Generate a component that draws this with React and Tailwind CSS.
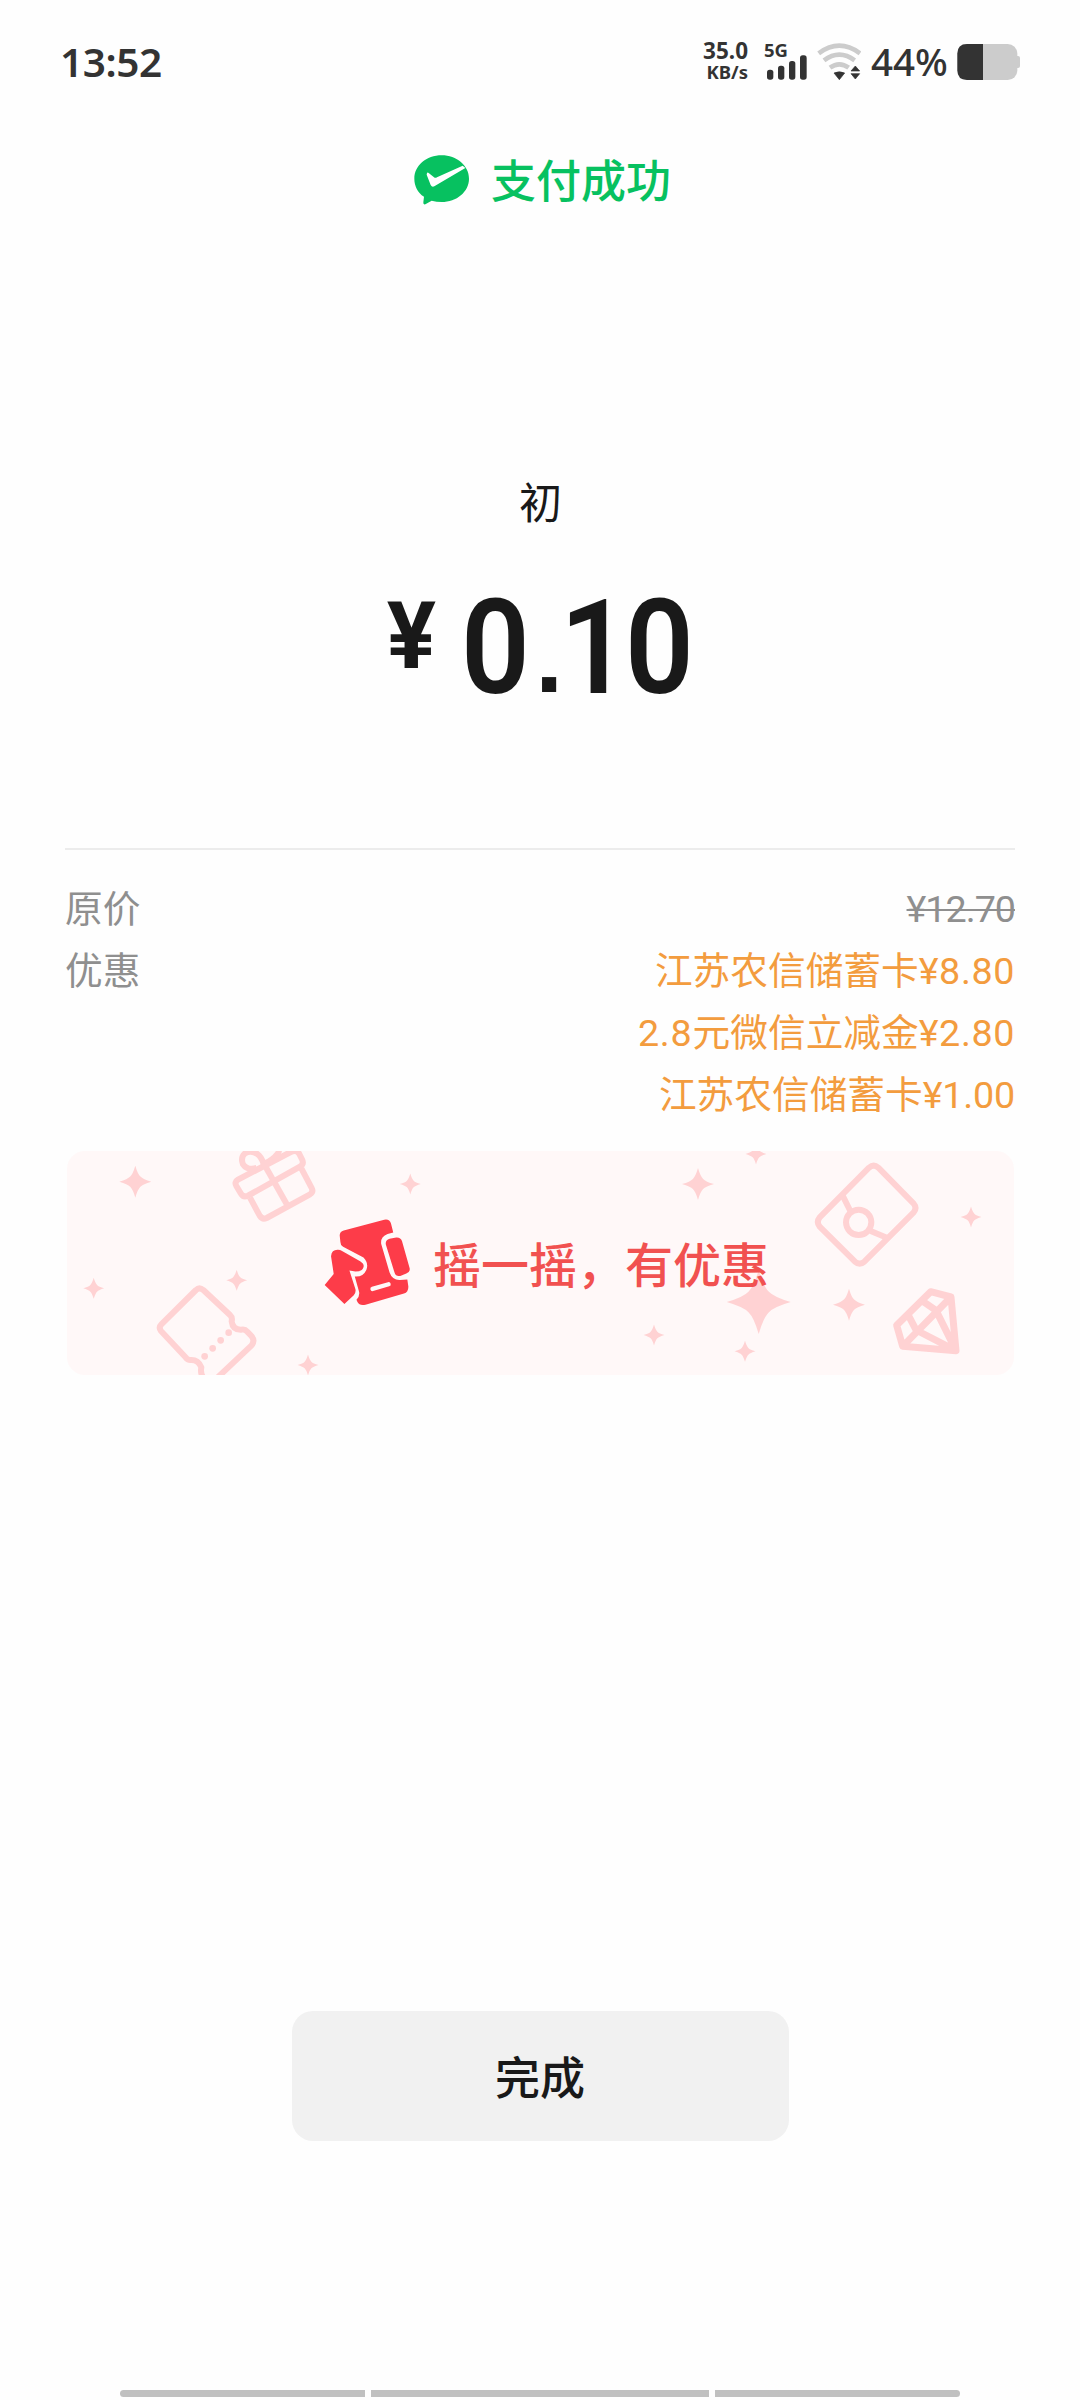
const CJK = "font-['Roboto','Noto_Sans_CJK_SC',sans-serif]";

const discounts = [
  { prefix: "", name: "江苏农信储蓄卡", amount: "¥8.80", tracking: "tracking-[0.6px]" },
  { prefix: "2.8", name: "元微信立减金", amount: "¥2.80", tracking: "tracking-[0.6px]" },
  { prefix: "", name: "江苏农信储蓄卡", amount: "¥1.00", tracking: "tracking-[-0.2px]" },
];

const stars = [
  [135.3, 1181.7, 16],
  [93.7, 1288.3, 10.5],
  [236.7, 1280.3, 10.5],
  [308, 1365, 10.5],
  [410.3, 1184, 10.5],
  [698, 1184, 16],
  [758.7, 1302, 32],
  [756, 1154, 10.5],
  [654, 1335, 10.5],
  [745, 1351.3, 10.5],
  [971, 1217, 10.5],
  [849, 1304.7, 16],
];

function StatusBar() {
  return (
    <header className="flex h-[124px] shrink-0 items-center justify-between pl-[60px] pr-[60px] font-['Noto_Sans',sans-serif] font-semibold text-[#333333]">
      <span className="text-[40.5px] leading-none tracking-[-0.4px]">13:52</span>
      <div className="-mt-[2px] flex h-[44px] items-center">
        <div className="-mt-[2px] mr-[1px] flex w-[48px] flex-col items-end text-right">
          <span className="text-[22.5px] font-bold leading-[23px]">35.0</span>
          <span className="text-[18.5px] font-bold leading-[19px]">KB/s</span>
        </div>
        <div className="ml-[15px] flex w-[44px] flex-col">
          <span className="text-[18.5px] font-bold leading-[14px]">5G</span>
          <svg className="-mt-[2px] ml-[3px]" width="40" height="25" viewBox="258 106 120 75" fill="#333">
            <rect x="258" y="150" width="19" height="30" rx="8" />
            <rect x="291" y="138" width="19" height="42" rx="8" />
            <rect x="324" y="124" width="19" height="56" rx="8" />
            <rect x="357" y="107" width="20" height="73" rx="8" />
          </svg>
        </div>
        <svg className="ml-[9px]" width="44" height="37" viewBox="409 70 132 111">
          <g fill="none" stroke="#cccccc" strokeWidth="14">
            <path d="M414 101Q476 55 538 101" />
            <path d="M430 122Q476 88 522 122" />
            <path d="M448 144Q476 124 504 144" />
          </g>
          <g fill="#333" stroke="#333" strokeWidth="2" strokeLinejoin="round">
            <path d="M460 160Q476 153 492 160L476 180Z" />
            <path d="M524 139L537 154H511ZM511 162H537L524 178Z" />
          </g>
        </svg>
        <span className="ml-[10px] w-[80px] text-[38.5px] font-medium leading-[38px]">44%</span>
        <svg className="ml-[6px] mt-[2px]" width="63" height="36" viewBox="831 72 189 108">
          <path d="M1008 108H1014Q1020 108 1020 114V138Q1020 144 1014 144H1008Z" fill="#cccccc" />
          <rect x="832" y="72" width="180" height="108" rx="29" fill="#cccccc" />
          <path d="M909 72H861Q832 72 832 101V151Q832 180 861 180H909Z" fill="#333" />
        </svg>
      </div>
    </header>
  );
}

function PayIcon() {
  return (
    <svg className="-mt-[2px]" width="55" height="50" viewBox="73 71 165 150">
      <path
        d="M156 72C201 72 238 103 238 142S201 212 156 212Q140 212 126 208L107 219Q100 221 101 213L103 196C84 184 74 164 74 142C74 103 110 72 156 72Z"
        fill="#07c160"
      />
      <path
        d="M112 125Q114 122 118 126L133 138Q137 141 142 138L219 103L227 110L134 165Q127 169 123 161L111 130Z"
        fill="#fff"
      />
    </svg>
  );
}

function ShakeIcon() {
  return (
    <svg width="87" height="87" viewBox="72 115 260 260" className="relative -mt-[1px] shrink-0">
      <g fill="#fd3c49">
        <path d="M119 165Q118 153 131 149L252 117Q268 114 272 128L279 155L262 160Q240 168 243 190L268 275Q276 298 299 297L321 296L324 316Q325 334 311 338L196 371Q178 375 172 363L169 356Q179 347 177 333L164 287Q190 289 199 266Q206 246 190 230L129 198Q121 194 121 184Z" />
        <path d="M74 312L101 279L93 226Q95 206 114 207Q120 207 126 211L180 241Q196 251 188 264Q183 272 166 272L148 269L166 325Q168 336 161 343L133 369Z" />
        <path d="M257 192Q254 178 268 174L288 170Q301 169 305 181L328 262Q330 274 318 278L300 285Q287 288 283 276Z" />
      </g>
      <path d="M217 324L265 310" stroke="#fff8f8" strokeWidth="13" strokeLinecap="round" />
    </svg>
  );
}

function BannerPattern() {
  return (
    <svg className="pointer-events-none absolute inset-0" width="947" height="224" viewBox="67 1151 947 224">
      <g fill="#ffd2d3">
        {stars.map(([x, y, r]) => (
          <path
            key={`${x}-${y}`}
            transform={`translate(${x} ${y}) scale(${r})`}
            d="M0-1Q.15-.48.32-.32Q.48-.15 1 0Q.48.15.32.32Q.15.48 0 1Q-.15.48-.32.32Q-.48.15-1 0Q-.48-.15-.32-.32Q-.15-.48 0-1Z"
          />
        ))}
      </g>
      <g fill="none" stroke="#ffd2d3" strokeWidth="18" strokeLinejoin="round">
        <g transform="translate(50 1130) scale(.33333)">
          <path d="M564 149L722 66Q740 57 748 72L757 90Q762 103 750 110L594 197Q580 203 573 191L559 168Q552 156 564 149Z" />
          <path d="M600 203L629 257Q637 270 650 264L780 193Q791 186 785 174L754 115" />
          <path d="M640 98L712 226" />
          <path d="M620 114Q592 122 579 103Q571 83 584 71Q602 58 622 72Q634 80 641 102Q667 92 684 70Q690 60 684 48" />
          <path d="M438 480Q448 470 460 480L540 555Q548 562 545 574Q548 600 574 599Q584 596 592 605L605 619Q616 633 604 647L500 745L462 745Q450 732 454 712Q445 690 424 690Q414 692 406 681L333 603Q325 592 334 583Z" />
          <g fill="#ffd2d3" stroke="none">
            <circle cx="536" cy="608" r="10" />
            <circle cx="512" cy="631" r="10" />
            <circle cx="488" cy="655" r="10" />
            <circle cx="464" cy="679" r="10" />
          </g>
        </g>
        <g transform="translate(790 1130) scale(.33333)">
          <path d="M237 113Q251 101 265 113L371 221Q382 234 371 247L223 395Q209 407 195 395L89 290Q78 276 89 262Z" />
          <circle cx="206" cy="277" r="38" />
          <path d="M158 197L181 243M242 303L294 325" />
          <path d="M422 485L483 501L498 662L338 649L320 586ZM483 501L338 649M400 515L438 541L498 662M356 558L378 600L498 662" strokeWidth="21" />
        </g>
      </g>
    </svg>
  );
}

export default function App() {
  return (
    <div className={`flex h-[2400px] w-[1080px] flex-col overflow-hidden bg-[#fefefe] text-[#191919] ${CJK}`}>
      <StatusBar />

      <div className="flex h-[114px] shrink-0 items-center justify-center gap-[22px] pl-[5px]">
        <PayIcon />
        <h1 className="pt-[2px] text-[45px] font-medium leading-none text-[#07c160]">支付成功</h1>
      </div>

      <section className="mt-[240px] flex h-[370px] shrink-0 flex-col items-center">
        <p className="pl-[1px] text-[43px] leading-[52px]">初</p>
        <div className="mt-[66px] flex items-start pr-[2px] font-['Roboto',sans-serif]">
          <span className="mt-[5px] text-[92px] font-bold leading-[72px]">¥</span>
          <div className="ml-[25px] flex text-[131px] font-semibold leading-[104px]">
            <span className="w-[74px] origin-left scale-x-[.92]">0</span>
            <span className="w-[25px] font-['Liberation_Sans',sans-serif] text-[100px] font-bold leading-[122px]">.</span>
            <span className="w-[65px] origin-left scale-x-[.92]">1</span>
            <span className="w-[66px] origin-left scale-x-[.92]">0</span>
          </div>
        </div>
      </section>

      <section className="mx-[65px] shrink-0 border-t-2 border-[#ececec] pt-[28px] text-[37.7px] leading-[62px]">
        <div className="flex justify-between text-[#8f8f8f]">
          <span>原价</span>
          <span className="tracking-[-1px] line-through decoration-2">¥12.70</span>
        </div>
        <div className="flex justify-between">
          <span className="text-[#8f8f8f]">优惠</span>
          <ul className="text-right text-[#f39c3e]">
            {discounts.map(({ prefix, name, amount, tracking }) => (
              <li key={prefix + name + amount}>
                {prefix && <span className="tracking-[0.8px]">{prefix}</span>}
                {name}
                <span className={tracking}>{amount}</span>
              </li>
            ))}
          </ul>
        </div>
      </section>

      <section className="relative ml-[67px] mr-[66px] mt-[25px] flex h-[224px] shrink-0 items-center gap-[22px] overflow-hidden rounded-[18px] bg-[#fff8f8] pl-[257px]">
        <BannerPattern />
        <ShakeIcon />
        <span className="relative whitespace-nowrap pt-[8px] text-[48px] font-medium leading-none text-[#f15150]">摇一摇，有优惠</span>
      </section>

      <button className="mx-auto mt-[636px] h-[130px] w-[497px] shrink-0 rounded-[21px] bg-[#f1f1f1] pt-[8px] text-[45px] font-medium">
        完成
      </button>

      <div className="mx-[120px] mb-[3px] mt-auto flex h-[7px] gap-[6px]">
        <div className="w-[245px] rounded-l-full bg-[#c0c0c0]" />
        <div className="flex-1 bg-[#c0c0c0]" />
        <div className="w-[245px] rounded-r-full bg-[#c0c0c0]" />
      </div>
    </div>
  );
}
